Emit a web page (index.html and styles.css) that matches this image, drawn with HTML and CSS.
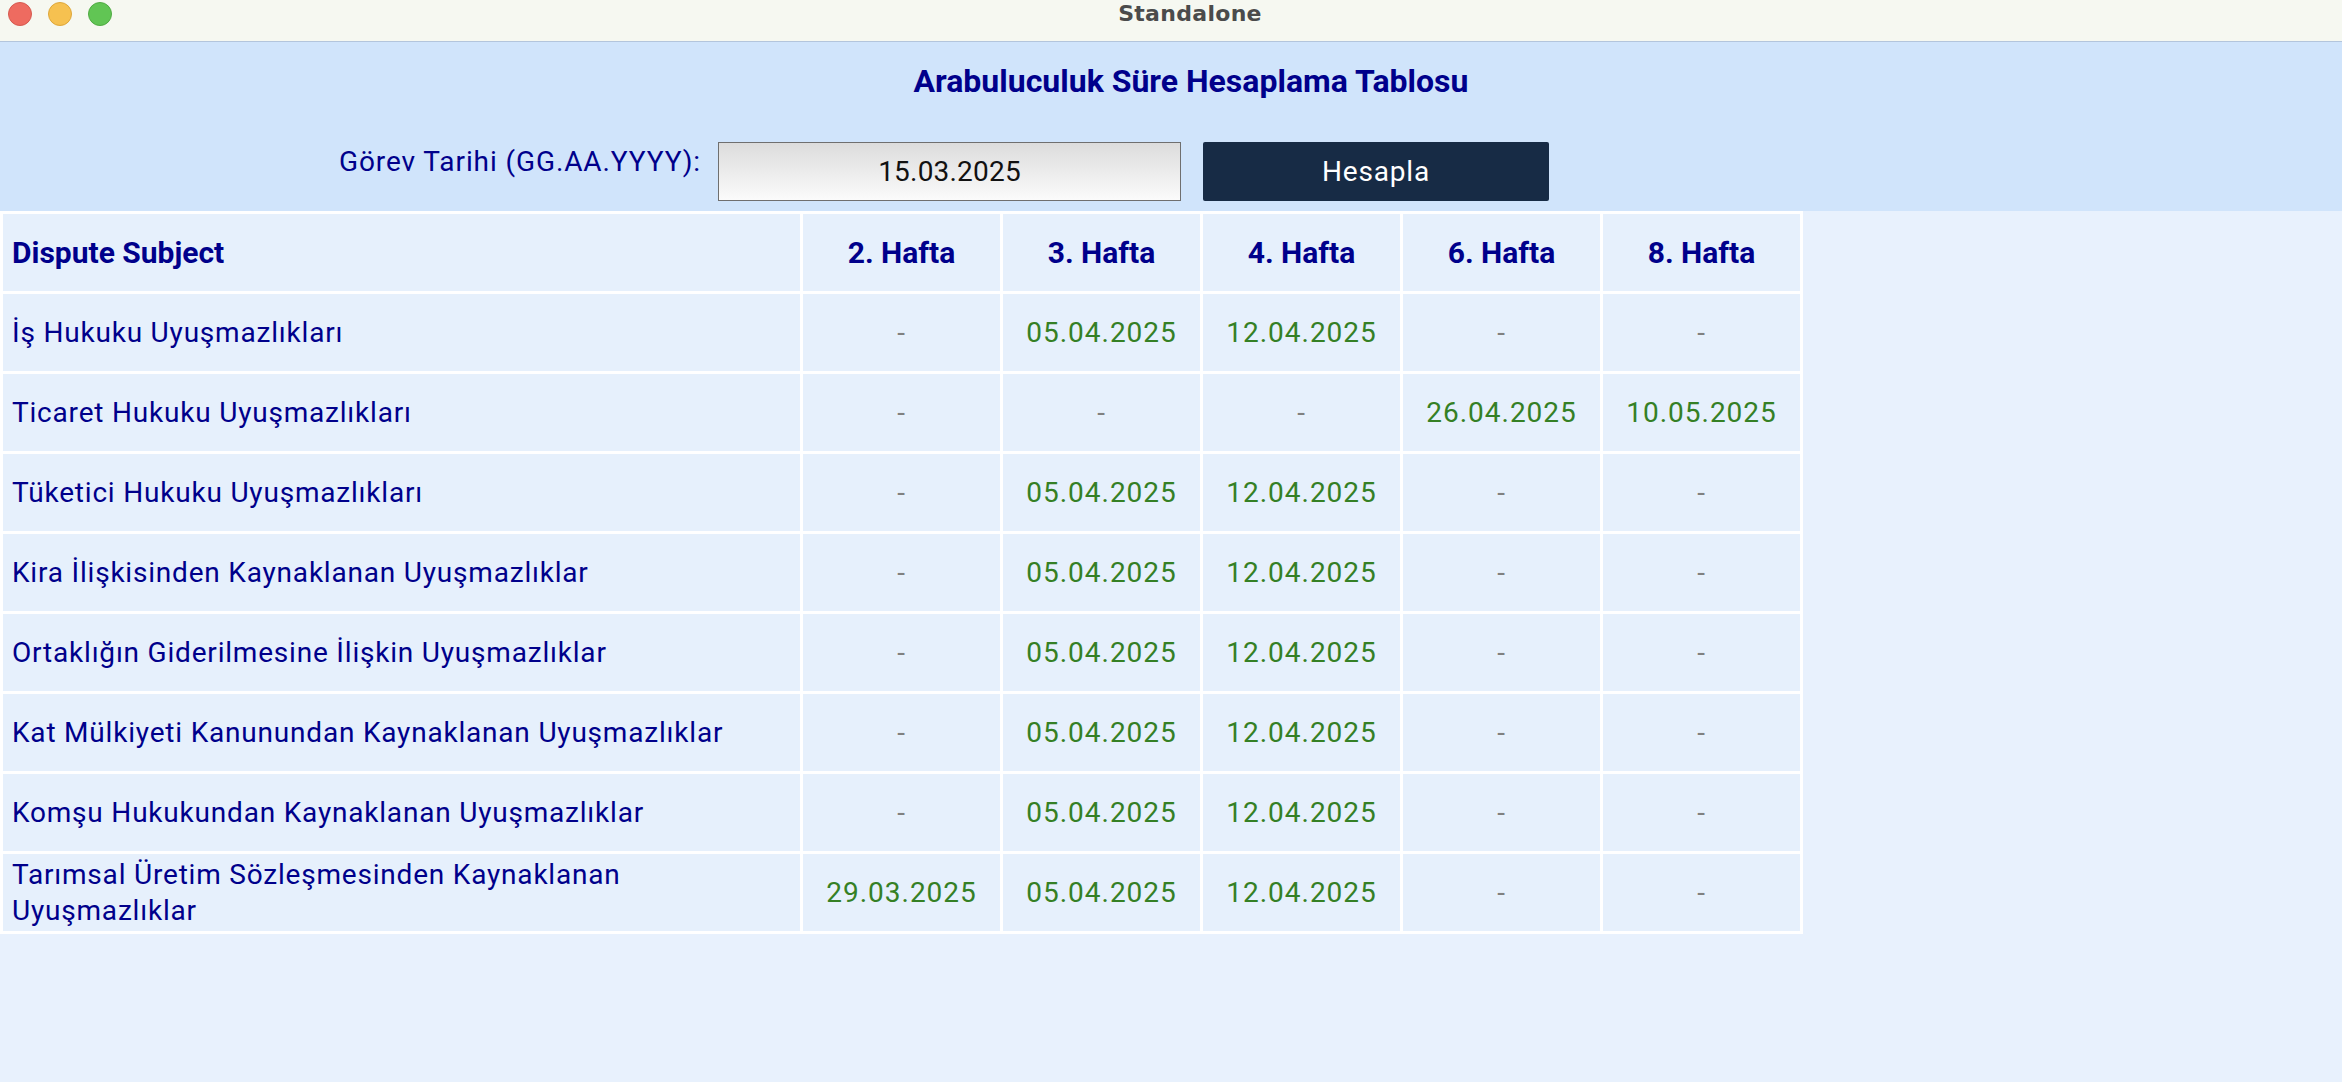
FILE: index.html
```html
<!DOCTYPE html>
<html lang="tr">
<head>
<meta charset="utf-8">
<title>Standalone</title>
<link rel="stylesheet" href="styles.css">
</head>
<body>
<div class="window">
  <div class="titlebar">
    <div class="lights">
      <span class="light red"></span>
      <span class="light yellow"></span>
      <span class="light green"></span>
    </div>
    <div class="wtitle">Standalone</div>
  </div>
  <div class="app">
    <div class="header">
      <h1 class="title">Arabuluculuk Süre Hesaplama Tablosu</h1>
      <div class="controls">
        <label class="lbl" for="date">Görev Tarihi (GG.AA.YYYY):</label>
        <div class="input" id="date">15.03.2025</div>
        <button class="btn" type="button">Hesapla</button>
      </div>
    </div>
    <table class="grid">
      <colgroup>
        <col class="c-subj">
        <col class="c-wk"><col class="c-wk"><col class="c-wk"><col class="c-wk"><col class="c-wk">
      </colgroup>
      <thead>
        <tr>
          <th class="subj">Dispute Subject</th>
          <th>2. Hafta</th>
          <th>3. Hafta</th>
          <th>4. Hafta</th>
          <th>6. Hafta</th>
          <th>8. Hafta</th>
        </tr>
      </thead>
      <tbody>
        <tr>
          <td class="subj">İş Hukuku Uyuşmazlıkları</td>
          <td class="na">-</td><td class="d">05.04.2025</td><td class="d">12.04.2025</td><td class="na">-</td><td class="na">-</td>
        </tr>
        <tr>
          <td class="subj">Ticaret Hukuku Uyuşmazlıkları</td>
          <td class="na">-</td><td class="na">-</td><td class="na">-</td><td class="d">26.04.2025</td><td class="d">10.05.2025</td>
        </tr>
        <tr>
          <td class="subj">Tüketici Hukuku Uyuşmazlıkları</td>
          <td class="na">-</td><td class="d">05.04.2025</td><td class="d">12.04.2025</td><td class="na">-</td><td class="na">-</td>
        </tr>
        <tr>
          <td class="subj">Kira İlişkisinden Kaynaklanan Uyuşmazlıklar</td>
          <td class="na">-</td><td class="d">05.04.2025</td><td class="d">12.04.2025</td><td class="na">-</td><td class="na">-</td>
        </tr>
        <tr>
          <td class="subj">Ortaklığın Giderilmesine İlişkin Uyuşmazlıklar</td>
          <td class="na">-</td><td class="d">05.04.2025</td><td class="d">12.04.2025</td><td class="na">-</td><td class="na">-</td>
        </tr>
        <tr>
          <td class="subj">Kat Mülkiyeti Kanunundan Kaynaklanan Uyuşmazlıklar</td>
          <td class="na">-</td><td class="d">05.04.2025</td><td class="d">12.04.2025</td><td class="na">-</td><td class="na">-</td>
        </tr>
        <tr>
          <td class="subj">Komşu Hukukundan Kaynaklanan Uyuşmazlıklar</td>
          <td class="na">-</td><td class="d">05.04.2025</td><td class="d">12.04.2025</td><td class="na">-</td><td class="na">-</td>
        </tr>
        <tr>
          <td class="subj">Tarımsal Üretim Sözleşmesinden Kaynaklanan Uyuşmazlıklar</td>
          <td class="d">29.03.2025</td><td class="d">05.04.2025</td><td class="d">12.04.2025</td><td class="na">-</td><td class="na">-</td>
        </tr>
      </tbody>
    </table>
  </div>
</div>
</body>
</html>
```

FILE: styles.css
```css
* { box-sizing: border-box; }
html, body { margin: 0; padding: 0; }
body {
  width: 2342px;
  height: 1082px;
  overflow: hidden;
  background: #e8f1fd;
  font-family: Roboto, "Liberation Sans", sans-serif;
}
.window { display: flex; flex-direction: column; height: 1082px; }

.titlebar {
  height: 42px;
  flex: none;
  display: flex;
  align-items: flex-start;
  background: #f6f8f1;
  border-bottom: 1px solid #b3c5dc;
}
.lights { display: flex; gap: 16px; padding: 2px 0 0 8px; }
.light {
  width: 24px; height: 24px; border-radius: 50%;
  display: block;
}
.red { background: #ee6b60; border: 1px solid #d65a50; }
.yellow { background: #f6c150; border: 1px solid #dea73a; }
.green { background: #61c554; border: 1px solid #50ab43; }
.wtitle {
  flex: 1;
  text-align: center;
  padding-right: 74px;
  font-family: "DejaVu Sans", sans-serif;
  font-weight: bold;
  font-size: 22px;
  letter-spacing: 0.3px;
  color: #4b4b4b;
  line-height: 28px;
}

.app { flex: 1; background: #e8f1fd; }
.header {
  background: #d0e4fb;
  padding: 19px 0 10px 0;
  height: 169px;
}
.title {
  margin: 0;
  padding-left: 40px;
  text-align: center;
  font-size: 32px;
  line-height: 40px;
  font-weight: bold;
  color: #00008b;
}
.controls {
  display: flex;
  align-items: flex-start;
  margin-top: 41px;
  padding-left: 339px;
  height: 59px;
}
.lbl {
  font-size: 28px;
  line-height: 36px;
  margin-top: 2px;
  color: #00008b;
  width: 362px;
  letter-spacing: 0.9px;
}
.input {
  margin-left: 17px;
  width: 463px;
  height: 59px;
  border: 1px solid #6f6f6f;
  background: linear-gradient(#dcdcdc, #fbfbfb);
  display: flex;
  align-items: center;
  justify-content: center;
  font-size: 28px;
  letter-spacing: 0.2px;
  color: #111;
}
.btn {
  margin-left: 22px;
  width: 346px;
  height: 59px;
  border: none;
  border-radius: 2px;
  background: #172b45;
  color: #fff;
  font-family: Roboto, "Liberation Sans", sans-serif;
  font-size: 28px;
  letter-spacing: 0.8px;
  padding: 0;
}

.grid {
  table-layout: fixed;
  width: 1803px;
  border-collapse: separate;
  border-spacing: 3px;
  background: #ffffff;
}
.c-subj { width: 797px; }
.c-wk { width: 197px; }
.grid th, .grid td {
  height: 77px;
  padding: 0 9px;
  background: #e6f0fc;
  vertical-align: middle;
  text-align: center;
}
.grid th {
  font-size: 30px;
  font-weight: bold;
  color: #00008b;
}
.grid td {
  font-size: 28px;
  letter-spacing: 0.8px;
  line-height: 36px;
}
.grid td.d { letter-spacing: 1px; }
.grid .subj {
  text-align: left;
  color: #00008b;
}
.grid th.subj { letter-spacing: 0; }
.grid td.d { color: #358025; }
.grid td.na { color: #808080; }
```
